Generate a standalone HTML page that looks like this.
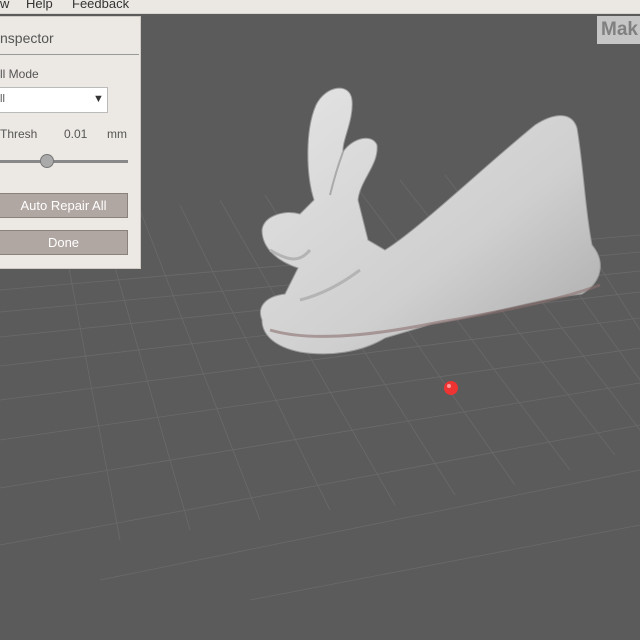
<!DOCTYPE html>
<html><head><style>
body{margin:0;width:640px;height:640px;overflow:hidden;background:#5b5b5b;font-family:"Liberation Sans",sans-serif;position:relative}
.menu{position:absolute;left:0;top:0;width:640px;height:13px;background:#ebe8e3;border-bottom:1px solid #d8d5d0;font-size:13px;color:#333;line-height:10px}
.menu span{position:absolute;top:-1px}
.panel{position:absolute;left:0;top:16px;width:140px;height:251px;background:#ece9e4;border:1px solid #cfcac4;border-left:none;font-size:12px;color:#555}
.t{position:absolute}
.btn{position:absolute;left:0;width:127px;height:23px;background:#b0a6a2;border:1px solid #8a807c;border-left:none;color:#fff;font-size:13px;text-align:center;line-height:23px}
.mak{position:absolute;left:597px;top:16px;width:50px;height:28px;background:#c6c6c6;color:#808080;font-weight:bold;font-size:19px;line-height:28px;padding-left:4px}
</style></head><body>
<svg width="640" height="640" style="position:absolute;left:0;top:0">
<defs><linearGradient id="g" x1="0" y1="0" x2="1" y2="1"><stop offset="0" stop-color="#e4e4e4"/><stop offset="0.6" stop-color="#cfcfcf"/><stop offset="1" stop-color="#a9a9a9"/></linearGradient></defs>
<g stroke="#6a6a6a" stroke-width="0.8" fill="none">
<path d="M0 290 L640 235 M0 312 L640 252 M0 337 L640 271 M0 366 L640 292 M0 400 L640 318 M0 440 L640 348 M0 488 L640 383 M0 545 L640 425 M100 580 L640 470 M250 600 L640 525"/>
<path d="M140 210 L260 520 M180 205 L330 510 M220 200 L395 505 M265 195 L455 495 M310 190 L515 485 M355 185 L570 470 M400 180 L615 455 M445 175 L640 430 M490 170 L640 380 M535 165 L640 330 M100 215 L190 530 M60 220 L120 540"/>
</g>
<path d="M262 320 C256 305 268 296 285 294 L298 268 C280 262 262 250 262 230 C264 215 285 210 300 214 L314 200 C306 175 305 130 316 105 C326 85 350 82 352 100 C354 120 342 140 343 152 C352 138 372 133 377 145 C379 165 360 180 358 200 L368 240 L385 250 C420 228 480 170 535 125 C555 112 572 112 577 128 C584 170 585 210 592 245 C606 262 602 282 582 294 C530 300 485 316 432 324 L385 338 C362 352 330 357 300 352 C275 347 262 335 262 320 Z" fill="url(#g)" stroke="#9a9a9a"/>
<path d="M330 195 C335 175 340 160 343 152" stroke="#aaa" stroke-width="2" fill="none"/>
<path d="M270 250 C290 262 300 262 310 250 M300 300 C320 295 340 285 360 270" stroke="#b4b4b4" stroke-width="3" fill="none"/>
<path d="M270 330 C320 345 400 330 440 322 C500 312 560 300 600 285" stroke="#8a7070" stroke-width="3" fill="none" opacity="0.6"/>
<circle cx="451" cy="388" r="7" fill="#e33"/>
<circle cx="449" cy="386" r="2" fill="#f99"/>
</svg>
<div class="menu"><span style="left:0">w</span><span style="left:26px">Help</span><span style="left:72px">Feedback</span></div>
<div class="panel">
<div class="t" style="left:0;top:13px;font-size:14px">nspector</div>
<div style="position:absolute;left:0;top:37px;width:139px;height:1px;background:#999"></div>
<div class="t" style="left:0;top:50px">ll Mode</div>
<div style="position:absolute;left:0;top:70px;width:107px;height:24px;background:#fff;border:1px solid #bbb;border-left:none"><span style="position:absolute;left:0;top:5px;font-size:11px">ll</span><span style="position:absolute;left:93px;top:5px;font-size:11px;color:#333">▼</span></div>
<div class="t" style="left:0;top:110px">Thresh</div>
<div class="t" style="left:64px;top:110px">0.01</div>
<div class="t" style="left:107px;top:110px">mm</div>
<div style="position:absolute;left:0;top:143px;width:128px;height:3px;background:#888"></div>
<div style="position:absolute;left:40px;top:137px;width:12px;height:12px;border-radius:50%;background:#aaa;border:1px solid #777"></div>
<div class="btn" style="top:176px">Auto Repair All</div>
<div class="btn" style="top:213px">Done</div>
</div>
<div class="mak">Mak</div>
</body></html>
